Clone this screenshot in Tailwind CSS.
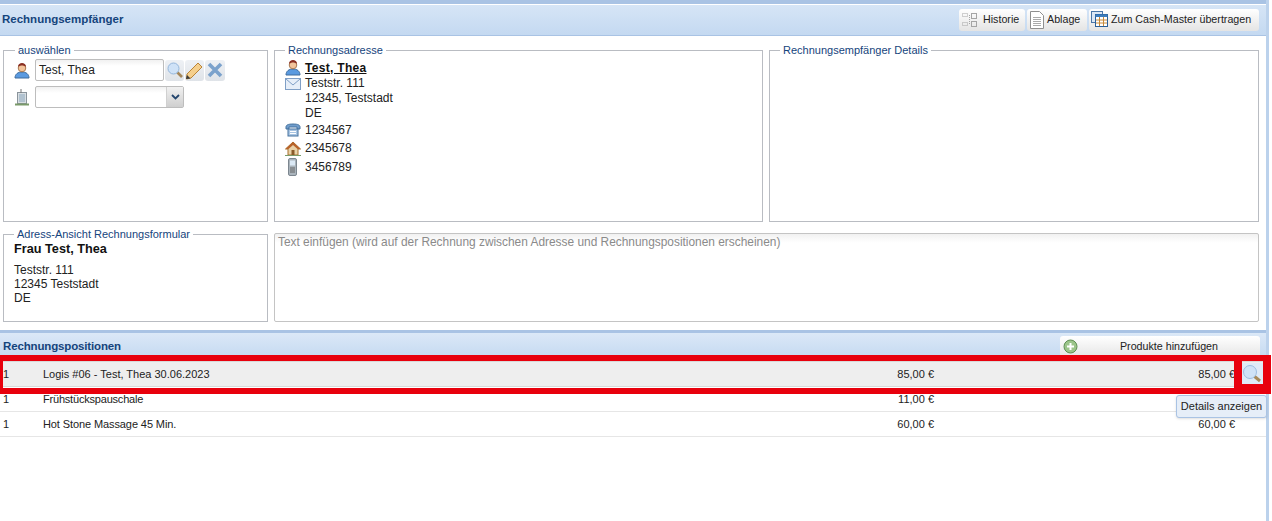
<!DOCTYPE html>
<html lang="de">
<head>
    <meta charset="UTF-8">
    <title>Rechnung</title>
    <script src="https://cdn.jsdelivr.net/npm/@tailwindcss/browser@4"></script>
</head>
<body class="bg-white text-[12px] text-[#222] font-['Liberation_Sans',sans-serif]">
<div class="relative w-[1272px] h-[521px] overflow-hidden flex">
    <div class="w-[1266px] shrink-0">
        <!-- Rechnungsempfänger -->
        <div class="h-[4px] bg-[#a9c3e4]"></div>
        <div class="h-[31px] mt-[1px] pl-[2px] pr-[7px] flex items-center justify-between bg-gradient-to-b from-[#d6e5f6] to-[#c4d9f1] border-b border-[#a9c3e4]">
            <span class="font-bold text-[11.5px] text-[#15447c]">Rechnungsempfänger</span>
            <div class="flex gap-[2px] mt-[-1px]">
                <button class="w-[66px] h-[22px] pl-[3px] flex items-center gap-[5px] text-[10.7px] rounded-[3px] bg-gradient-to-b from-white to-[#e4e4e4]">
                    <svg width="16" height="16" viewBox="0 0 16 16" fill="none" stroke="#a5a5a5"><rect x="0.500" y="1.500" width="5" height="3" stroke-dasharray="1 1"/><rect x="9.500" y="1.500" width="5" height="5"/><rect x="0.500" y="10.500" width="5" height="3" stroke-dasharray="1 1"/><rect x="9.500" y="9.500" width="5" height="5"/><path d="M7.500 3v9" stroke-dasharray="1 1"/></svg>
                    Historie
                </button>
                <button class="w-[60px] h-[22px] pl-[2px] flex items-center gap-[2px] text-[10.7px] rounded-[3px] bg-gradient-to-b from-white to-[#e4e4e4]">
                    <svg width="16" height="18" viewBox="0 0 16 18" fill="#fff" stroke="#8f8f8f"><path d="M1.500 0.500h9l4 4v13h-13z"/><path d="M4 6.500h8M4 8.500h8M4 10.500h8M4 12.500h8M4 14.500h8" stroke="#aaa"/></svg>
                    Ablage
                </button>
                <button class="w-[170px] h-[22px] pl-[2px] flex items-center gap-[3px] text-[10.7px] rounded-[3px] bg-gradient-to-b from-white to-[#e4e4e4]">
                    <svg width="17" height="17" viewBox="0 0 17 17"><rect x="0.500" y="0.500" width="11" height="11" fill="#dbe7f5" stroke="#4a76a8"/><rect x="4.500" y="3.500" width="12" height="12" fill="#fff" stroke="#2a6099"/><rect x="4.500" y="3.500" width="12" height="2.500" fill="#3d7dbd"/><path d="M5 9h11M5 12h11M8.500 6v9M12.500 6v9" stroke="#c88a3a"/></svg>
                    Zum Cash-Master übertragen
                </button>
            </div>
        </div>

        <div class="pl-[3px] pr-[7px]">
            <div class="flex gap-[6px] mt-[7px]">
                <fieldset class="w-[265px] h-[179px] border border-[#b9bcc2] px-[11px] shrink-0">
                    <legend class="px-[3px] text-[11px] leading-[14px] text-[#15447c]">auswählen</legend>
                    <div class="flex items-center mt-[2px]">
                        <svg class="ml-[-1px]" width="16" height="17" viewBox="0 0 16 17"><path d="M1 16c0-4 3-6 7-6s7 2 7 6z" fill="#5a9ae0" stroke="#3f6d9e"/><circle cx="8" cy="6" r="3.800" fill="#f2c49b" stroke="#a8784f"/><path d="M4 5c0-3 2-4 4-4s4 1 4 4c-2-2-6-2-8 0z" fill="#8a2f22"/></svg>
                        <div class="ml-[5px] w-[129px] h-[22px] border border-[#bdbdbd] rounded-[2px] bg-gradient-to-b from-[#f1f1f1] to-white to-[30%] pl-[3px] flex items-center text-[12px]">Test, Thea</div>
                        <div class="w-[19px] h-[21px] ml-[1px] flex items-center justify-center rounded-[3px] bg-gradient-to-b from-[#eef1f5] to-[#dfe3e8]">
                            <svg width="18" height="18" viewBox="0 0 18 18"><path d="M11 11l5 5" stroke="#a5875a" stroke-width="2.600"/><circle cx="7.500" cy="7.500" r="5.500" fill="#cfe2f7" stroke="#94b6db"/></svg>
                        </div>
                        <div class="w-[19px] h-[21px] ml-[1px] flex items-center justify-center rounded-[3px] bg-gradient-to-b from-[#eef1f5] to-[#dfe3e8]">
                            <svg width="19" height="19" viewBox="0 0 19 19"><path d="M2 13L13 2l4 4L6 17l-4.500 1z" fill="#f5cf8c" stroke="#b98438"/><path d="M1 18l1-4 3.500 3.500z" fill="#3c3c3c"/></svg>
                        </div>
                        <div class="w-[20px] h-[21px] ml-[1px] flex items-center justify-center rounded-[3px] bg-gradient-to-b from-[#eef1f5] to-[#dfe3e8]">
                            <svg width="18" height="18" viewBox="0 0 18 18"><path d="M3 3l12 12M15 3L3 15" stroke="#7ba2cc" stroke-width="3.600"/></svg>
                        </div>
                    </div>
                    <div class="flex items-center mt-[5px]">
                        <svg class="ml-[-1px]" width="16" height="18" viewBox="0 0 16 18"><rect x="3.500" y="4.500" width="9" height="11" fill="#d9dfe3" stroke="#8a949c"/><path d="M5 7h6M5 9h6M5 11h6M5 13h6" stroke="#8aa6bd"/><path d="M7 1v4" stroke="#777"/><path d="M1 16.500h14" stroke="#7a9a6a" stroke-width="2"/></svg>
                        <div class="ml-[5px] w-[149px] h-[22px] border border-[#bdbdbd] rounded-[2px] flex justify-end bg-gradient-to-b from-[#f1f1f1] to-white to-[30%]">
                            <div class="w-[17px] flex items-center justify-center bg-gradient-to-b from-[#f1f1f1] to-[#cfcfcf] border-l border-[#d0d0d0]">
                                <svg width="9" height="6" viewBox="0 0 9 6"><path d="M1 1l3.500 3.500L8 1" fill="none" stroke="#24466e" stroke-width="1.800"/></svg>
                            </div>
                        </div>
                    </div>
                </fieldset>

                <fieldset class="w-[489px] h-[179px] border border-[#b9bcc2] px-[10px] shrink-0">
                    <legend class="px-[3px] text-[11px] leading-[14px] text-[#15447c]">Rechnungsadresse</legend>
                    <div class="flex h-[17px] items-center mt-[2px]">
                        <svg width="16" height="17" viewBox="0 0 16 17"><path d="M1 16c0-4 3-6 7-6s7 2 7 6z" fill="#5a9ae0" stroke="#3f6d9e"/><circle cx="8" cy="6" r="3.800" fill="#f2c49b" stroke="#a8784f"/><path d="M4 5c0-3 2-4 4-4s4 1 4 4c-2-2-6-2-8 0z" fill="#8a2f22"/></svg>
                        <span class="ml-[4px] font-bold text-[12px] tracking-[0.3px] underline text-[#111]">Test, Thea</span>
                    </div>
                    <div class="flex mt-[0px]">
                        <svg class="mt-[2px] shrink-0" width="16" height="12" viewBox="0 0 16 12"><rect x="0.500" y="0.500" width="15" height="11" fill="#e6eef8" stroke="#7f9fc6"/><path d="M1 1l7 6 7-6" fill="none" stroke="#7f9fc6"/></svg>
                        <div class="ml-[4px] leading-[15px] text-[12px]">Teststr. 111<br>12345, Teststadt<br>DE</div>
                    </div>
                    <div class="flex items-center h-[18px] mt-[0px]">
                        <svg width="16" height="14" viewBox="0 0 16 14"><path d="M1 4c0-2 2-3 7-3s7 1 7 3v2h-3V4H4v2H1z" fill="#6f9ccb" stroke="#46739f"/><rect x="3" y="6" width="10" height="7" fill="#a9c5e2" stroke="#46739f"/><path d="M5 8.500h6M5 10.500h6" stroke="#fff"/></svg>
                        <span class="ml-[4px]">1234567</span>
                    </div>
                    <div class="flex items-center h-[18px]">
                        <svg width="16" height="15" viewBox="0 0 16 15"><path d="M8 1L0.500 8h2.500v6h10V8h2.500z" fill="#e8d2a8" stroke="#a8702f"/><path d="M8 1L0.500 8h3L8 4l4.500 4h3z" fill="#b8622a"/><rect x="6.500" y="9" width="3" height="5" fill="#8a5a2a"/><path d="M0 14.500h16" stroke="#7a9a6a"/></svg>
                        <span class="ml-[4px]">2345678</span>
                    </div>
                    <div class="flex items-center h-[18px] mt-[1px]">
                        <svg width="16" height="18" viewBox="0 0 16 18"><rect x="3.500" y="0.500" width="8" height="17" rx="1.500" fill="#aab4bc" stroke="#7c868f"/><rect x="5" y="2.500" width="5" height="5" fill="#dbe9f5"/><path d="M5 10h5M5 12h5M5 14h5" stroke="#666"/></svg>
                        <span class="ml-[4px]">3456789</span>
                    </div>
                </fieldset>

                <fieldset class="w-[490px] h-[179px] border border-[#b9bcc2] px-[10px] shrink-0">
                    <legend class="px-[3px] text-[11px] leading-[14px] text-[#15447c]">Rechnungsempfänger Details</legend>
                </fieldset>
            </div>

            <div class="flex gap-[6px] mt-[5px]">
                <fieldset class="w-[265px] h-[95px] border border-[#b9bcc2] px-[10px] shrink-0">
                    <legend class="px-[3px] text-[11px] leading-[14px] text-[#15447c]">Adress-Ansicht Rechnungsformular</legend>
                    <div class="font-bold text-[12.7px] leading-[15px] text-[#111] mt-[1px]">Frau Test, Thea</div>
                    <div class="leading-[14px] mt-[6px]">Teststr. 111<br>12345 Teststadt<br>DE</div>
                </fieldset>
                <div class="w-[985px] h-[89px] mt-[6px] border border-[#c4c4c4] rounded-[2px] bg-gradient-to-b from-[#f1f1f1] to-white to-[10%] pl-[3px] text-[11.9px] text-[#8a8a8a] shrink-0">Text einfügen (wird auf der Rechnung zwischen Adresse und Rechnungspositionen erscheinen)</div>
            </div>
        </div>

        <!-- Rechnungspositionen -->
        <div class="h-[3px] mt-[8px] bg-[#a9c3e4]"></div>
        <div class="h-[26px] pl-[3px] pr-[6px] flex items-center justify-between bg-gradient-to-b from-[#dbe8f7] to-[#c4d9f1]">
            <span class="font-bold text-[11.5px] tracking-[-0.15px] text-[#15447c] mt-[2px]">Rechnungspositionen</span>
            <button class="w-[200px] h-[22px] mt-[1px] pl-[3px] flex items-center text-[10.7px] rounded-t-[3px] bg-gradient-to-b from-white to-[#e4e4e4]">
                <svg width="15" height="15" viewBox="0 0 15 15"><circle cx="7.500" cy="7.500" r="6.500" fill="#9cc58a" stroke="#5f8f52"/><path d="M7.500 4v7M4 7.500h7" stroke="#fff" stroke-width="2"/></svg>
                <span class="flex-1 text-center">Produkte hinzufügen</span>
            </button>
        </div>

        <div class="text-[11px] pt-[2px]">
            <div class="h-[26px] flex items-center bg-[#eeeeee] border-y border-[#d9d9d9]">
                <span class="w-[43px] pl-[3px]">1</span>
                <span class="w-[780px]">Logis #06 - Test, Thea 30.06.2023</span>
                <span class="w-[111px] text-right">85,00 €</span>
                <span class="w-[301px] text-right">85,00 €</span>
                <svg class="ml-[6px]" width="22" height="22" viewBox="0 0 22 22"><rect width="22" height="22" fill="#dfeaf7"/><path d="M13 13l6 5" stroke="#a88a5a" stroke-width="3"/><circle cx="9" cy="9" r="6.500" fill="#cfe2f7" stroke="#9dbde0"/></svg>
            </div>
            <div class="h-[25px] flex items-center border-b border-[#e6e6e6]">
                <span class="w-[43px] pl-[3px]">1</span>
                <span class="w-[780px] tracking-[-0.2px]">Frühstückspauschale</span>
                <span class="w-[111px] text-right">11,00 €</span>
                <span class="w-[301px] text-right">11,00 €</span>
            </div>
            <div class="h-[25px] flex items-center border-b border-[#e6e6e6]">
                <span class="w-[43px] pl-[3px]">1</span>
                <span class="w-[780px] tracking-[-0.1px]">Hot Stone Massage 45 Min.</span>
                <span class="w-[111px] text-right">60,00 €</span>
                <span class="w-[301px] text-right">60,00 €</span>
            </div>
        </div>
    </div>
    <div class="w-[3px] bg-[#bcd2ec] shrink-0"></div>

    <!-- tooltip -->
    <div class="absolute left-[1176px] top-[395px] w-[91px] h-[23px] flex items-center justify-center text-[11px] bg-[#e6eef8] border border-[#a9c3e4] rounded-[3px] shadow-sm">Details anzeigen</div>
    <!-- red markers drawn on the screenshot -->
    <div class="absolute left-0 top-[355px] w-[1271px] h-[39px] border-[6px] border-x-[3px] border-[#e8000d]"></div>
    <div class="absolute left-[1234px] top-[355px] w-[37px] h-[35px] border-[6px] border-x-[8px] border-[#e8000d]"></div>
</div>
</body>
</html>
